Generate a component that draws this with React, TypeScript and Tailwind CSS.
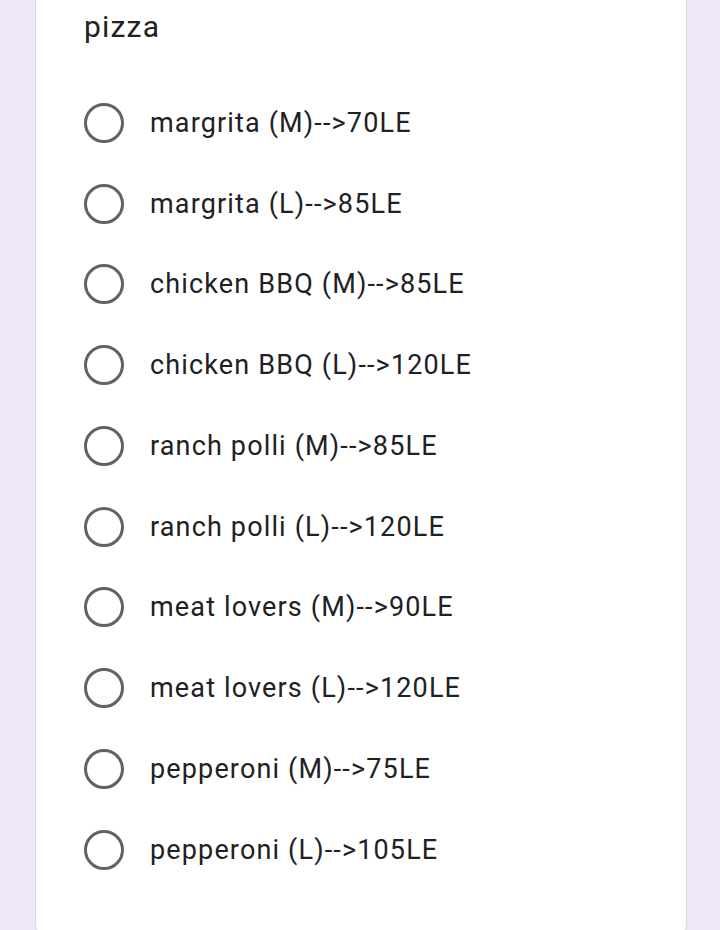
import React from "react";

const items = [
  "margrita (M)-->70LE",
  "margrita (L)-->85LE",
  "chicken BBQ (M)-->85LE",
  "chicken BBQ (L)-->120LE",
  "ranch polli (M)-->85LE",
  "ranch polli (L)-->120LE",
  "meat lovers (M)-->90LE",
  "meat lovers (L)-->120LE",
  "pepperoni (M)-->75LE",
  "pepperoni (L)-->105LE",
];

export default function App() {
  return (
    <div className="min-h-[930px] w-[720px] bg-[#ede7f6] overflow-hidden" style={{ fontFamily: "Roboto, 'Noto Sans', sans-serif" }}>
      <div className="ml-[35px] w-[652px] min-h-[940px] bg-white border-x border-[#dadce0] rounded-b-[16px] pl-[48px] pr-[48px]">
        <div className="pt-[7px] h-[82.6px] text-[30px] leading-[40px] tracking-[1.2px] text-[#202124]">pizza</div>
        <div className="flex flex-col">
          {items.map((t) => (
            <div key={t} className="h-[80.75px] flex items-center gap-[26px]">
              <div className="w-[40px] h-[40px] rounded-full border-[3.5px] border-[#5f6368] shrink-0" />
              <span className="text-[27px] text-[#202124] leading-none tracking-[1.15px] pt-[1px]">{t}</span>
            </div>
          ))}
        </div>
      </div>
    </div>
  );
}
